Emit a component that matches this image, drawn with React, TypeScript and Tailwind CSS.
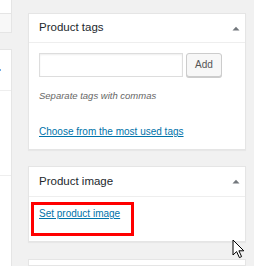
import React from 'react';

const Toggle: React.FC = () => (
  <svg width="8" height="5" viewBox="0 0 8 5" className="block">
    <path d="M0.5 4.5 L4 0.8 L7.5 4.5 Z" fill="#72777c" />
  </svg>
);

const Cursor: React.FC = () => (
  <svg width="13" height="20" viewBox="0 0 13 20" className="absolute left-[232px] top-[239px]">
    <path
      d="M1 1 L1 16 L4.6 12.6 L7.4 18.6 L9.6 17.6 L6.9 11.8 L11.8 11.8 Z"
      fill="#fff"
      stroke="#000"
      strokeWidth="1"
      strokeLinejoin="round"
    />
  </svg>
);

const Box: React.FC<{ title: string; children: React.ReactNode; className?: string; headerH: string }> = ({
  title,
  children,
  className,
  headerH,
}) => (
  <div className={`bg-white border border-[#e5e5e5] shadow-[0_1px_1px_rgba(0,0,0,0.04)] ${className ?? ''}`}>
    <div className={`flex items-center justify-between border-b border-[#eeeeee] pl-[10px] pr-[5px] ${headerH}`}>
      <h2 className="text-[11.5px] text-[#23282d] leading-none">{title}</h2>
      <Toggle />
    </div>
    {children}
  </div>
);

export default function App() {
  return (
    <div
      className="relative w-[254px] h-[266px] overflow-hidden bg-[#f1f1f1] flex"
      style={{ fontFamily: '"Liberation Sans", Arial, sans-serif' }}
    >
      {/* left column, cut off */}
      <div className="w-[12px] flex flex-col">
        <div className="h-[13px] bg-white border-r border-[#e5e5e5]" />
        <div className="h-[20px] bg-[#f8f8f8] border-t border-b border-r border-[#e5e5e5]" />
        <div className="h-[16px]" />
        <div className="flex-1 bg-white border-t border-r border-[#e5e5e5] flex flex-col">
          <div className="h-[41px] border-b border-[#eeeeee] relative">
            <div className="absolute left-0 top-[19px] w-[1px] h-[2px] bg-[#72aee6]" />
          </div>
          <div className="h-[85px] border-b border-[#eeeeee]" />
        </div>
      </div>

      {/* main column */}
      <div className="w-[218px] ml-[16px] flex flex-col pt-[13px]">
        <Box title="Product tags" headerH="h-[29px]">
          <div className="px-[10px] pt-[10px] pb-[11px]">
            <div className="flex items-center h-[24px] gap-[3px]">
              <input
                type="text"
                className="w-[144px] h-[24px] border border-[#dddddd] shadow-[inset_0_1px_2px_rgba(0,0,0,0.07)] bg-white outline-none"
              />
              <button className="w-[36px] h-[24px] rounded-[3px] border border-[#cccccc] bg-[#f7f7f7] shadow-[0_1px_0_#cccccc] text-[10px] text-[#555555] leading-none">
                Add
              </button>
            </div>
            <p className="mt-[13px] text-[9.5px] italic text-[#666666] leading-[12px]">Separate tags with commas</p>
            <p className="mt-[22px] leading-[12px]">
              <a href="#" className="text-[10px] text-[#0073aa] underline">
                Choose from the most used tags
              </a>
            </p>
          </div>
        </Box>

        <Box title="Product image" headerH="h-[30px]" className="mt-[16px]">
          <div className="pl-[2px] pt-[5px] pb-[5px]">
            <div className="w-[103px] h-[34px] border-[3px] border-[#ff0000] pl-[5px] pt-[3px]">
              <a href="#" className="text-[10px] text-[#0073aa] underline leading-[12px] block">
                Set product image
              </a>
            </div>
          </div>
        </Box>

        <div className="mt-[17px] h-[20px] bg-white border border-[#e5e5e5]" />
      </div>

      <Cursor />
    </div>
  );
}
